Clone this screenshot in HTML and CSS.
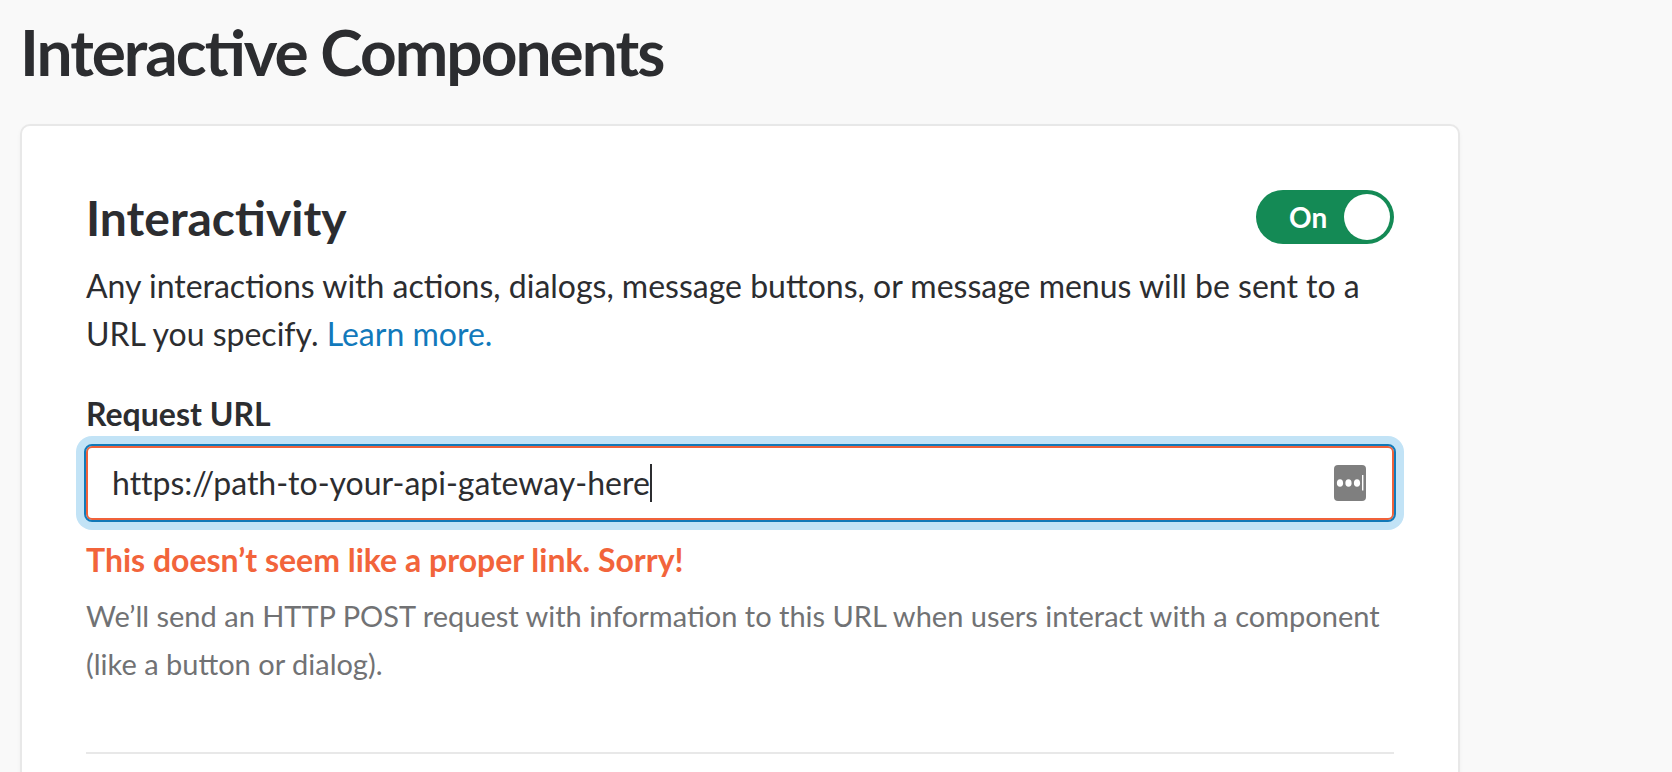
FILE: index.html
```html
<!DOCTYPE html>
<html lang="en">
<head>
<meta charset="utf-8">
<title>Interactive Components</title>
<link rel="stylesheet" href="styles.css">
</head>
<body>
<main class="page">
  <h1 class="page-title">Interactive Components</h1>
  <section class="card">
    <header class="card-header">
      <h2 class="card-title">Interactivity</h2>
      <button class="toggle" type="button" role="switch" aria-checked="true"><span>On</span><span class="knob"></span></button>
    </header>
    <p class="intro">Any interactions with actions, dialogs, message buttons, or message menus will be sent to a URL you specify. <a class="link" href="#">Learn more.</a></p>
    <label class="label" for="request-url">Request URL</label>
    <div class="field">
      <div class="value">
        <input class="input" id="request-url" type="text" value="https://path-to-your-api-gateway-here" spellcheck="false">
        <span class="caret"></span>
      </div>
      <button class="manager" type="button" aria-label="Fill from password manager">
        <svg class="manager-icon" viewBox="0 0 32 36"><rect width="32" height="36" rx="4" fill="#7f7f7f"/><g fill="#fff"><ellipse cx="6" cy="18" rx="3.1" ry="3.8"/><ellipse cx="14.5" cy="18" rx="3.1" ry="3.8"/><ellipse cx="23" cy="18" rx="3.1" ry="3.8"/><rect x="28" y="10" width="1.4" height="15.5"/></g></svg>
      </button>
    </div>
    <p class="error">This doesn’t seem like a proper link. Sorry!</p>
    <p class="hint">We’ll send an HTTP POST request with information to this URL when users interact with a component (like a button or dialog).</p>
    <hr class="divider">
  </section>
</main>
</body>
</html>
```
FILE: styles.css
```css
* { box-sizing: border-box; }
body { margin: 0; background: #f9f9f9; color: #2c2d30; font-family: Lato, "Liberation Sans", sans-serif; font-size: 32px; line-height: 48px; overflow: hidden; }
h1, h2, p { margin: 0; }
.page { padding: 14px 212px 0 20px; }
.page-title { font-size: 64px; line-height: 76px; font-weight: 700; letter-spacing: -2px; font-feature-settings: "liga" 1; }
.card { margin-top: 34px; padding: 64px; border: 2px solid #e8e8e8; border-radius: 10px; background: #fff; box-shadow: 0 2px 4px rgba(0, 0, 0, 0.04); }
.card-header { display: flex; justify-content: space-between; align-items: flex-start; height: 72px; }
.card-title { font-size: 48px; line-height: 56px; font-weight: 700; }
.toggle { display: flex; align-items: center; justify-content: space-between; width: 138px; height: 54px; padding: 0 4px 0 33px; border: 0; border-radius: 27px; background: #148a55; color: #fff; font: 700 28px/36px Lato, sans-serif; }
.knob { width: 46px; height: 46px; border-radius: 50%; background: #fff; }
.link { color: #1279bb; text-decoration: none; }
.label { display: block; margin-top: 32px; font-weight: 700; }
.field { display: flex; align-items: center; justify-content: space-between; height: 78px; margin: 6px -2px 0; padding: 0 28px 0 26px; border: 2px solid #1279b8; border-radius: 8px; background: #fff; box-shadow: inset 0 0 0 2px #f0623a, 0 0 0 8px #c2e3f6; }
.value { display: flex; align-items: center; flex: 1; }
.input { field-sizing: content; padding: 0; border: 0; outline: 0; background: none; color: inherit; font: 32px/44px Lato, sans-serif; font-variant-ligatures: none; }
.caret { width: 2px; height: 38px; background: #2c2d30; }
.manager { padding: 0; border: 0; background: none; }
.manager-icon { display: block; width: 32px; height: 36px; }
.error { margin-top: 14px; color: #f2643b; font-weight: 700; }
.hint { margin-top: 8px; color: #717274; font-size: 29px; }
.divider { margin: 64px 0 0; border: 0; border-top: 2px solid #e8e8e8; }
```
